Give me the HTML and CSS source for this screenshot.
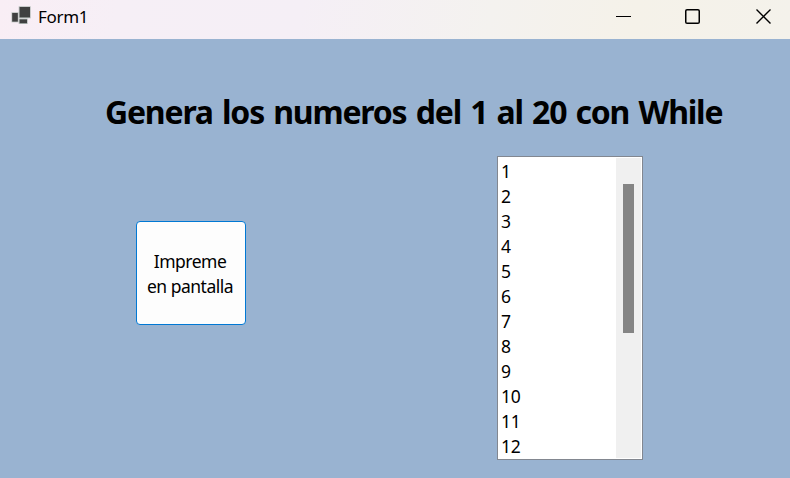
FILE: index.html
```html
<!DOCTYPE html>
<html lang="es">
<head>
<meta charset="utf-8">
<title>Form1</title>
<link rel="stylesheet" href="styles.css">
</head>
<body>
<div class="window">
  <header class="titlebar">
    <svg class="app-icon" width="20" height="19" viewBox="0 0 20 19">
      <g fill="#b5bdba">
        <rect x=".5" y="6.3" width="7" height="10"/>
        <rect x="7.7" y=".3" width="12" height="12"/>
        <rect x="7.7" y="12.6" width="9" height="5.4"/>
      </g>
      <g fill="#404040">
        <rect x="1.2" y="7" width="5.6" height="8.6"/>
        <rect x="8.6" y="1" width="10.4" height="10.4"/>
        <rect x="8.6" y="13.4" width="7.4" height="3.8"/>
      </g>
    </svg>
    <span class="caption">Form1</span>
    <div class="controls">
      <svg width="15" height="15" viewBox="0 0 15 15"><path d="M0 7.5H15" stroke="#000" fill="none"/></svg>
      <svg class="maximize" width="15" height="15" viewBox="0 0 15 15"><rect x=".75" y=".75" width="13.5" height="13.5" rx="1.3" stroke="#000" stroke-width="1.5" fill="none"/></svg>
      <svg class="close" width="15" height="15" viewBox="0 0 15 15"><path d="M.5.5l14 14M14.5.5l-14 14" stroke="#000" stroke-width="1.4" fill="none"/></svg>
    </div>
  </header>
  <main class="form">
    <h1 class="heading">Genera los numeros del 1 al 20 con While</h1>
    <div class="content">
      <button class="print" type="button"><span>Impreme</span><span>en pantalla</span></button>
      <div class="listbox">
        <ul class="items">
          <li>1</li><li>2</li><li>3</li><li>4</li><li>5</li><li>6</li>
          <li>7</li><li>8</li><li>9</li><li>10</li><li>11</li><li>12</li>
        </ul>
        <div class="scrollbar"><div class="thumb"></div></div>
      </div>
    </div>
  </main>
</div>
</body>
</html>
```
FILE: styles.css
```css
* { box-sizing: border-box; }
body {
  margin: 0;
  font-family: "Noto Sans", "Open Sans", sans-serif;
  font-size: 17.5px;
  color: #000;
}
.window {
  width: 790px;
  height: 478px;
  display: flex;
  flex-direction: column;
  overflow: hidden;
}
.titlebar {
  height: 39px;
  flex: none;
  display: flex;
  align-items: flex-start;
  padding: 6px 19px 0 11px;
  background: linear-gradient(100deg, #f9eef5 0%, #f6eff6 15%, #f5eff6 38%, #f4f2ef 62%, #f5f2e9 80%, #f4f2eb 100%);
}
.app-icon { flex: none; }
.caption {
  margin-left: 7px;
  font-size: 17px;
  line-height: 22px;
  letter-spacing: -0.3px;
}
.controls {
  margin: 3px 0 0 auto;
  display: flex;
}
.maximize { margin-left: 54px; }
.close { margin-left: 56px; }
.form {
  flex: 1;
  background: #99b3d1;
  padding-top: 51px;
}
.heading {
  margin: 0 0 0 105px;
  font-size: 32px;
  line-height: 44px;
  font-weight: 700;
  white-space: nowrap;
  letter-spacing: -1.2px;
  word-spacing: 2.1px;
}
.content {
  display: flex;
  align-items: flex-start;
  justify-content: space-between;
  margin: 22px 147px 0 136px;
}
.print {
  width: 110px;
  height: 104px;
  margin: 65px 0 0;
  padding: 2px 2px 0 0;
  border: 1px solid #0078d4;
  border-radius: 4px;
  background: #fdfdfd;
  color: #000;
  font: inherit;
  line-height: 25px;
  letter-spacing: -0.5px;
  display: flex;
  flex-direction: column;
  align-items: center;
  justify-content: center;
  white-space: nowrap;
}
.listbox {
  width: 146px;
  height: 304px;
  display: flex;
  justify-content: space-between;
  border: 1px solid #828790;
  background: #fff;
  padding: 1px;
}
.items {
  list-style: none;
  margin: 0;
  padding: 1px 0 0 2px;
  line-height: 25px;
  letter-spacing: -0.3px;
}
.scrollbar {
  width: 25px;
  background: #f0f0f0;
  padding: 26px 0 0 7px;
}
.thumb {
  width: 11px;
  height: 149px;
  background: #858585;
}
```
